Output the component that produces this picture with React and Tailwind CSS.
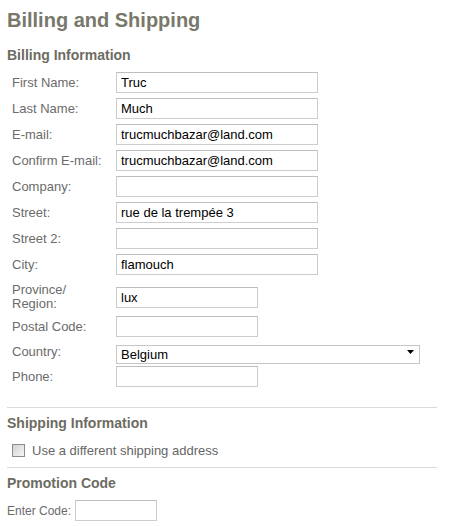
import { useState } from "react";

const rows = [
  { label: "First Name:", value: "Truc" },
  { label: "Last Name:", value: "Much" },
  { label: "E-mail:", value: "trucmuchbazar@land.com" },
  { label: "Confirm E-mail:", value: "trucmuchbazar@land.com" },
  { label: "Company:", value: "" },
  { label: "Street:", value: "rue de la trempée 3" },
  { label: "Street 2:", value: "" },
  { label: "City:", value: "flamouch" },
];

// Simple text box in the old-school grey border style
const TextBox = ({ value, width }) => (
  <input
    type="text"
    defaultValue={value}
    className={`${width} h-[21px] border border-[#cdcdcd] border-t-[#bdbdbd] bg-white px-[4px] text-[13px] text-black outline-none`}
  />
);

const Label = ({ children }) => (
  <label className="w-[109px] h-[21px] shrink-0 pl-[5px] pt-[1px] text-[13px] leading-[20px] text-[#6b6b6b]">
    {children}
  </label>
);

export default function App() {
  const [otherShipping, setOtherShipping] = useState(false);

  return (
    <div className="w-[458px] h-[526px] bg-white pl-[7px] pt-2 font-['Liberation_Sans',Arial,sans-serif]">
      <h1 className="text-[20px] leading-[24px] font-bold text-[#78786b]">
        Billing and Shipping
      </h1>

      {/* Billing */}
      <h2 className="mt-[15px] text-[14px] leading-4 font-bold text-[#6c6c62]">
        Billing Information
      </h2>
      <div className="mt-[9px] flex flex-col gap-[5px]">
        {rows.map((row) => (
          <div key={row.label} className="flex items-start h-[21px]">
            <Label>{row.label}</Label>
            <TextBox value={row.value} width="w-[202px]" />
          </div>
        ))}

        <div className="flex items-start h-[31px]">
          <label className="w-[109px] shrink-0 pl-[5px] mt-[3px] text-[13px] leading-[14px] text-[#6b6b6b]">
            Province/
            <br />
            Region:
          </label>
          <div className="mt-[5px]">
            <TextBox value="lux" width="w-[142px]" />
          </div>
        </div>

        <div className="flex items-start h-[21px]">
          <Label>Postal Code:</Label>
          <TextBox value="" width="w-[142px]" />
        </div>

        <div className="flex items-start h-[19px]">
          <label className="w-[109px] shrink-0 pl-[5px] text-[13px] leading-[20px] text-[#6b6b6b]">
            Country:
          </label>
          <div className="relative">
            <select
              defaultValue="Belgium"
              className="w-[304px] h-[19px] appearance-none border border-[#c6c6c6] bg-white pl-[4px] text-[13px] leading-[17px] text-black outline-none"
            >
              <option>Belgium</option>
              <option>France</option>
              <option>Luxembourg</option>
              <option>Netherlands</option>
            </select>
            <svg
              className="pointer-events-none absolute right-[6px] top-[8px]"
              width="7"
              height="4"
              viewBox="0 0 7 4"
            >
              <path d="M0 0h7L3.5 4z" fill="#000" />
            </svg>
          </div>
        </div>

        <div className="flex items-start h-[21px]">
          <Label>Phone:</Label>
          <TextBox value="" width="w-[142px]" />
        </div>
      </div>

      {/* Shipping */}
      <div className="mt-[20px] w-[430px] border-t border-[#dadada]" />
      <h2 className="mt-[7px] text-[14px] leading-4 font-bold text-[#6c6c62]">
        Shipping Information
      </h2>
      <label
        className="mt-[12px] flex items-start cursor-pointer"
        onClick={() => setOtherShipping(!otherShipping)}
      >
        <span className="ml-[5px] mt-[1px] flex h-[13px] w-[13px] items-center justify-center border border-[#8c8c8c] bg-gradient-to-br from-[#d2d2d2] to-[#f6f6f6]">
          {otherShipping && (
            <svg width="9" height="8" viewBox="0 0 9 8">
              <path d="M1 4l2.5 2.5L8 1" stroke="#222" strokeWidth="1.6" fill="none" />
            </svg>
          )}
        </span>
        <span className="ml-[7px] text-[13px] leading-[15px] text-[#666]">
          Use a different shipping address
        </span>
      </label>

      {/* Promotion */}
      <div className="mt-[9px] w-[430px] border-t border-[#dadada]" />
      <h2 className="mt-[7px] text-[14px] leading-4 font-bold text-[#6c6c62]">
        Promotion Code
      </h2>
      <div className="mt-[9px] flex items-start">
        <label className="w-[68px] shrink-0 mt-[2px] text-[12px] leading-[19px] text-[#6b6b6b]">
          Enter Code:
        </label>
        <TextBox value="" width="w-[82px]" />
      </div>
    </div>
  );
}
